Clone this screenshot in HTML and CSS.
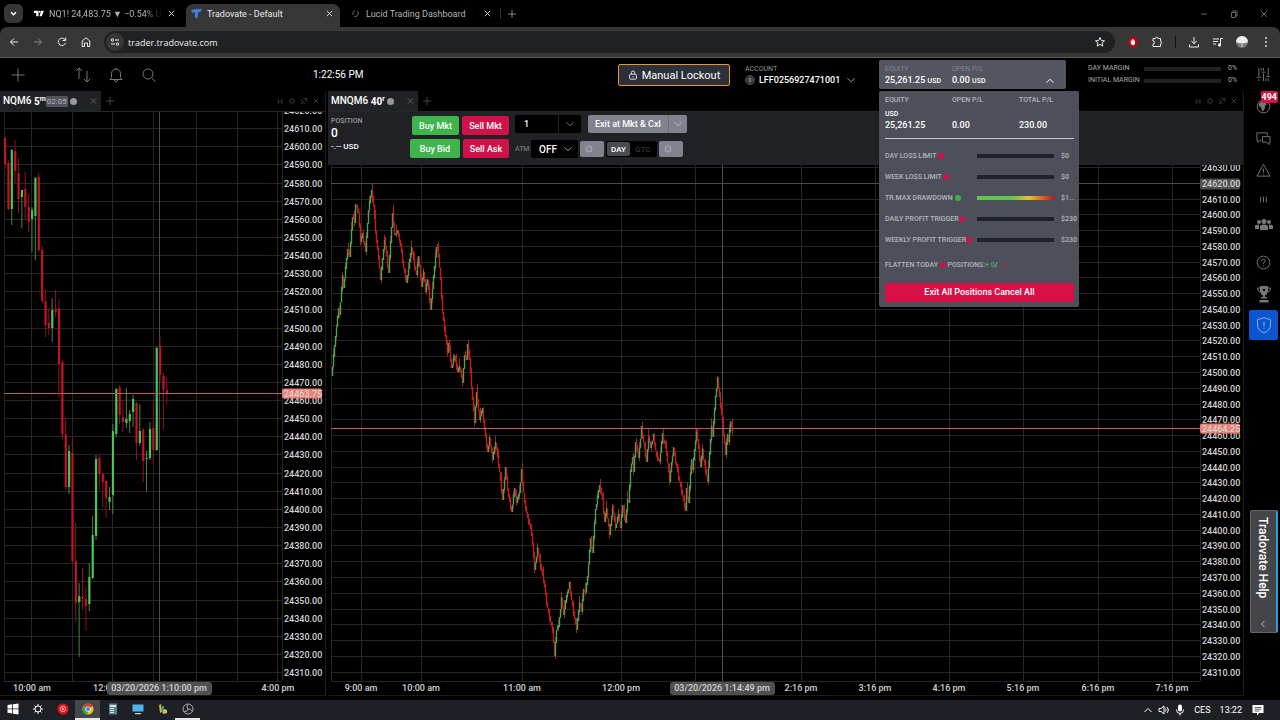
FILE: index.html
```
<!DOCTYPE html>
<html lang="en">
<head>
    <meta charset="UTF-8">
    <meta name="viewport" content="width=device-width, initial-scale=1.0">
    <title>Tradovate - Default</title>
    <link rel="stylesheet" href="styles.css">
</head>
<body>

<!-- shared icons -->
<svg class="defs" aria-hidden="true">
    <symbol id="i-x" viewBox="0 0 10 10"><path d="M2 2l6 6M8 2l-6 6"/></symbol>
    <symbol id="i-plus" viewBox="0 0 10 10"><path d="M5 1v8M1 5h8"/></symbol>
    <symbol id="i-down" viewBox="0 0 10 10"><path d="M1.5 3.2L5 6.8l3.5-3.6"/></symbol>
    <symbol id="i-gear" viewBox="0 0 12 12"><circle cx="6" cy="6" r="3"/><path d="M6 1v2M6 9v2M1 6h2M9 6h2M2.5 2.5l1.4 1.4M8.1 8.1l1.4 1.4M2.5 9.5l1.4-1.4M8.1 3.9l1.4-1.4"/></symbol>
    <symbol id="i-pop" viewBox="0 0 10 10"><path d="M4 2h4.500v4M8.500 2L5 5.500M3.500 4H2l1.500 2L1.500 8.500 4.500 7 6 8.500"/></symbol>
</svg>

<div class="tabstrip">
    <button class="tab-search" aria-label="Search tabs"><svg viewBox="0 0 10 10"><use href="#i-down"/></svg></button>
    <div class="tab">
        <svg class="favicon" viewBox="0 0 12 12"><path d="M1 3h5v6H3.500V5.500H1zM9 3h3L9.500 9H7z" fill="#fff"/><circle cx="7.300" cy="4.200" r="1.100" fill="#fff"/></svg>
        <span class="tab-title">NQ1! 24,483.75 ▼ −0.54% Unnamed</span>
        <button class="tab-close" aria-label="Close"><svg viewBox="0 0 10 10"><use href="#i-x"/></svg></button>
    </div>
    <div class="tab active">
        <svg class="favicon" viewBox="0 0 12 12"><path d="M0 2L12 .8 10.500 4.200 8 4.500 7 11.500 4 10 4.500 5.200 1.500 4.800z" fill="#3b82e0"/></svg>
        <span class="tab-title">Tradovate - Default</span>
        <button class="tab-close" aria-label="Close"><svg viewBox="0 0 10 10"><use href="#i-x"/></svg></button>
    </div>
    <div class="tab">
        <svg class="favicon" viewBox="0 0 12 12"><path d="M8 3.500a3.300 3.300 0 0 1-3.500 5.500M3.300 7.500A3.300 3.300 0 0 1 5.500 3" fill="none" stroke="#777" stroke-width="1"/></svg>
        <span class="tab-title">Lucid Trading Dashboard</span>
        <button class="tab-close" aria-label="Close"><svg viewBox="0 0 10 10"><use href="#i-x"/></svg></button>
    </div>
    <button class="tab-new" aria-label="New tab"><svg viewBox="0 0 10 10"><use href="#i-plus"/></svg></button>
    <div class="window-controls">
        <button aria-label="Minimize"><svg viewBox="0 0 10 10"><path d="M2 5h6"/></svg></button>
        <button aria-label="Restore"><svg viewBox="0 0 10 10"><path d="M2.500 3.500h4v5h-4zM4 3.500V2h4v5H6.500"/></svg></button>
        <button aria-label="Close window"><svg viewBox="0 0 10 10"><use href="#i-x"/></svg></button>
    </div>
</div>

<div class="browserbar">
    <button aria-label="Back"><svg viewBox="0 0 12 12"><path d="M10 6H2.500M6 2.500L2.500 6 6 9.500"/></svg></button>
    <button class="dim" aria-label="Forward"><svg viewBox="0 0 12 12"><path d="M2 6h7.500M6 2.500L9.500 6 6 9.500"/></svg></button>
    <button aria-label="Reload"><svg viewBox="0 0 12 12"><path d="M9.500 7A3.700 3.700 0 1 1 9 3.700M9.700 1.500V4.500H6.700"/></svg></button>
    <button aria-label="Home"><svg viewBox="0 0 12 12"><path d="M2.200 5L6 1.800 9.800 5v5.500H7.500V7h-3v3.500H2.200z"/></svg></button>
    <div class="urlbar">
        <span class="site-info"><svg viewBox="0 0 12 12"><circle cx="3.500" cy="4" r="1.200"/><path d="M6 4h4M2 8h4"/><circle cx="8.500" cy="8" r="1.200"/></svg></span>
        <input type="text" aria-label="Address" value="trader.tradovate.com">
        <svg class="star" viewBox="0 0 12 12"><path d="M6 1.500l1.300 3 3.200.3-2.400 2.100.7 3.200L6 8.400l-2.800 1.700.7-3.200L1.500 4.800l3.200-.3z"/></svg>
    </div>
    <div class="extensions">
        <svg viewBox="0 0 12 12"><ellipse cx="6" cy="6" rx="4.500" ry="5.500" fill="#c4001a" stroke="none"/><path d="M4.300 7V4.500M5.400 7V3.300M6.500 7V3.300M7.500 7V4.500" stroke="#fff" stroke-width=".9"/><path d="M4 6h4v1.500L7 9H5L4 7.500z" fill="#fff" stroke="none"/></svg>
        <svg viewBox="0 0 12 12"><path d="M2 2.500h2.500a1.300 1.300 0 0 1 2.600 0h2.400v2.800a1.200 1.200 0 0 1 0 2.400v2.800H2V8a1.500 1.500 0 0 0 0-3z"/></svg>
        <span class="sep"></span>
        <svg viewBox="0 0 12 12"><path d="M6 1v6.500M3.300 5L6 7.700 8.700 5M1.500 8.500v2.500h9V8.500"/></svg>
        <svg viewBox="0 0 12 12"><path d="M1 3h6M1 5.500h5M1 8h3M8.500 9V2.500H11"/><circle cx="7.500" cy="9" r="1.200" fill="#eee"/></svg>
        <svg class="avatar" viewBox="0 0 12 12"><circle cx="6" cy="6" r="6" fill="#777" stroke="none"/><path d="M0 6a6 6 0 0 1 12 0q-3 2-6 1-3 1-6-1z" fill="#eee" stroke="none"/><path d="M6 7v4" stroke="#ddd"/></svg>
        <svg viewBox="0 0 12 12"><g fill="#ddd" stroke="none"><circle cx="6" cy="2" r="1"/><circle cx="6" cy="6" r="1"/><circle cx="6" cy="10" r="1"/></g></svg>
    </div>
</div>

<div class="app">
    <div class="main">
        <header class="header">
            <div class="tools">
                <button class="add" aria-label="Add"><svg viewBox="0 0 16 16"><path d="M8 1.500v13M1.500 8h13"/></svg></button>
                <button aria-label="Orders"><svg viewBox="0 0 16 16"><path d="M4 12V1M1 4l3-3 3 3M12 4v11M9 12l3 3 3-3"/></svg></button>
                <button aria-label="Alerts"><svg viewBox="0 0 16 16"><path d="M2 12.500h12l-1.500-2V6.500a4.500 4.500 0 0 0-9 0v4zM6.500 13a1.500 1.500 0 0 0 3 0M8 2V1"/></svg></button>
                <button aria-label="Search"><svg viewBox="0 0 16 16"><circle cx="7" cy="7" r="5"/><path d="M11 11l3.500 4"/></svg></button>
            </div>
            <time class="clock">1:22:56 PM</time>
            <button class="lockout">
                <svg viewBox="0 0 12 12"><rect x="2" y="5" width="8" height="6" rx="1"/><path d="M4 5V3.200a2 2 0 0 1 4 0V5M6 7.500v1.500"/></svg>
                Manual Lockout
            </button>
            <div class="account">
                <span class="label">ACCOUNT</span>
                <button>
                    <svg class="coin" viewBox="0 0 12 12"><circle cx="6" cy="6" r="5"/><circle cx="6" cy="6" r="2.800"/><path d="M5.200 4.500v3h1.500v-3z"/></svg>
                    <span>LFF0256927471001</span>
                    <svg class="caret" viewBox="0 0 10 10"><use href="#i-down"/></svg>
                </button>
            </div>
            <div class="balance">
                <button class="balance-box">
                    <span class="stat"><span class="label">EQUITY</span><b>25,261.25 <small>USD</small></b></span>
                    <span class="stat"><span class="label">OPEN P/L</span><b>0.00 <small>USD</small></b></span>
                    <svg class="caret up" viewBox="0 0 10 10"><use href="#i-down"/></svg>
                </button>
                <div class="risk">
                    <table>
                        <thead><tr><th>EQUITY</th><th>OPEN P/L</th><th>TOTAL P/L</th></tr></thead>
                        <tbody><tr><td><small>USD</small>25,261.25</td><td>0.00</td><td>230.00</td></tr></tbody>
                    </table>
                    <ul>
                        <li><span>DAY LOSS LIMIT <i class="dot"></i></span><span class="bar"></span><span>$0</span></li>
                        <li><span>WEEK LOSS LIMIT <i class="dot"></i></span><span class="bar"></span><span>$0</span></li>
                        <li><span>TR.MAX DRAWDOWN<i class="dot ok"></i></span><span class="bar heat"></span><span>$1...</span></li>
                        <li><span>DAILY PROFIT TRIGGER<i class="dot"></i></span><span class="bar"></span><span>$230</span></li>
                        <li><span>WEEKLY PROFIT TRIGGER<i class="dot"></i></span><span class="bar"></span><span>$230</span></li>
                    </ul>
                    <p>FLATTEN TODAY <i class="dot"></i> POSITIONS:<span class="long">+ 0</span>/<span class="short"> - 0</span></p>
                    <button class="exit-all">Exit All Positions Cancel All</button>
                </div>
            </div>
            <div class="margins">
                <span>DAY MARGIN</span><span class="bar"></span><span>0%</span>
                <span>INITIAL MARGIN</span><span class="bar"></span><span>0%</span>
            </div>
        </header>

        <div class="panels">
            <section class="panel">
                <div class="panel-tabs">
                    <div class="panel-tab">
                        <strong>NQM6 <b>5<sup>m</sup></b></strong><span class="countdown">02:05</span><i class="status"></i>
                        <button aria-label="Close NQM6"><svg viewBox="0 0 10 10"><use href="#i-x"/></svg></button>
                    </div>
                    <button aria-label="Add tab"><svg viewBox="0 0 10 10"><use href="#i-plus"/></svg></button>
                    <div class="panel-controls">
                        <button>H</button>
                        <button aria-label="Settings"><svg viewBox="0 0 12 12"><use href="#i-gear"/></svg></button>
                        <button aria-label="Pop out"><svg viewBox="0 0 10 10"><use href="#i-pop"/></svg></button>
                        <button aria-label="Close"><svg viewBox="0 0 10 10"><use href="#i-x"/></svg></button>
                    </div>
                </div>
                <div class="chart" id="chart-nq"></div>
            </section>

            <section class="panel">
                <div class="panel-tabs">
                    <div class="panel-tab">
                        <strong>MNQM6 <b>40<sup>r</sup></b></strong><i class="status"></i>
                        <button aria-label="Close MNQM6"><svg viewBox="0 0 10 10"><use href="#i-x"/></svg></button>
                    </div>
                    <button aria-label="Add tab"><svg viewBox="0 0 10 10"><use href="#i-plus"/></svg></button>
                    <div class="panel-controls">
                        <button>H</button>
                        <button aria-label="Settings"><svg viewBox="0 0 12 12"><use href="#i-gear"/></svg></button>
                        <button aria-label="Pop out"><svg viewBox="0 0 10 10"><use href="#i-pop"/></svg></button>
                        <button aria-label="Close"><svg viewBox="0 0 10 10"><use href="#i-x"/></svg></button>
                    </div>
                </div>
                <div class="trade">
                    <div class="position">
                        <span class="label">POSITION</span>
                        <b>0</b>
                        <span>-.-- USD</span>
                    </div>
                    <div class="orders">
                        <div>
                            <button class="buy">Buy Mkt</button>
                            <button class="sell">Sell Mkt</button>
                        </div>
                        <div>
                            <button class="buy wide">Buy Bid</button>
                            <button class="sell">Sell Ask</button>
                        </div>
                    </div>
                    <div class="options">
                        <div class="row">
                            <div class="qty">
                                <input type="text" aria-label="Quantity" value="1">
                                <button aria-label="Quantity presets"><svg viewBox="0 0 10 10"><use href="#i-down"/></svg></button>
                            </div>
                            <div class="exit">
                                <button>Exit at Mkt &amp; Cxl</button>
                                <button class="more" aria-label="More exits"><svg viewBox="0 0 10 10"><use href="#i-down"/></svg></button>
                            </div>
                        </div>
                        <div class="row tight">
                            <label for="atm">ATM</label>
                            <div class="atm">
                                <select id="atm"><option>OFF</option><option>ON</option></select>
                                <svg viewBox="0 0 10 10"><use href="#i-down"/></svg>
                            </div>
                            <button class="gear" aria-label="ATM settings"><svg viewBox="0 0 12 12"><use href="#i-gear"/></svg></button>
                            <div class="tif"><button class="on">DAY</button><button>GTC</button></div>
                            <button class="gear" aria-label="Order settings"><svg viewBox="0 0 12 12"><use href="#i-gear"/></svg></button>
                        </div>
                    </div>
                </div>
                <div class="chart" id="chart-mnq"></div>
            </section>
        </div>
    </div>

    <nav class="sidebar">
        <button aria-label="Settings"><svg viewBox="0 0 16 16"><path d="M3 1v9M3 13v2M1 11h4M8 1v3M8 7v8M6 5.500h4M13 1v8M13 12v3M11 10h4M5.500 1v3M10.500 12v3"/></svg></button>
        <button aria-label="News"><svg viewBox="0 0 16 16"><circle cx="8" cy="8" r="6.800"/><path d="M5 3l4 0 2 3-2 1v3l-2 3-1-4-3-2z" fill="#777"/></svg><span class="badge">494</span></button>
        <button aria-label="Chat"><svg viewBox="0 0 16 16"><path d="M6 10H4l-2 2v-2H1V2h11v3M7 6h8v6h-1v2.500L11.500 12H7z"/></svg></button>
        <button aria-label="Warnings"><svg viewBox="0 0 16 16"><path d="M8 1.500L15 14H1zM8 6v4M8 11.500v1"/></svg></button>
        <button class="short" aria-label="Columns"><svg viewBox="0 0 16 16"><path d="M5 5v6M8 5v6M11 5v6"/></svg></button>
        <button class="short" aria-label="Community"><svg class="big" viewBox="0 0 18 16"><g fill="#777" stroke="none"><circle cx="9" cy="4.500" r="2.500"/><circle cx="4" cy="5" r="2"/><circle cx="14" cy="5" r="2"/><path d="M5 13V9.500Q5 7.500 9 7.500t4 2V13zM0 12V9q0-1.500 4-1.500v4.500zM18 12V9q0-1.500-4-1.500v4.500z"/></g></svg></button>
        <button class="after-gap" aria-label="Help"><svg viewBox="0 0 16 16"><circle cx="8" cy="8" r="6.800"/><path d="M6 6.500Q6 4.500 8 4.500t2 1.800Q10 7.500 8 8.500v1M8 11v1"/></svg></button>
        <button aria-label="Challenges"><svg class="big" viewBox="0 0 16 18"><path d="M4 3H1.500q0 4 3.500 4M12 3h2.500q0 4-3.500 4"/><path d="M4 1h8v5q-1 4-3 4.500V12h2v1.500H5V12h2v-1.500Q5 10 4 6zM3.500 15h9v2.500h-9z" fill="#777" stroke="none"/><circle cx="8" cy="5" r="1.300" fill="#111" stroke="none"/></svg></button>
        <button class="active" aria-label="Risk"><svg class="big" viewBox="0 0 16 18"><path d="M8 1.500Q11 3 14.500 3.500V9q0 5-6.500 8Q1.500 14 1.500 9V3.500Q5 3 8 1.500zM8 5.500v4.500M8 11.500v1.500"/></svg></button>
        <button class="help-tab">Tradovate Help <svg viewBox="0 0 10 10"><path d="M6.500 2L3.500 5l3 3"/></svg></button>
    </nav>
</div>

<footer class="taskbar">
    <button aria-label="Start"><svg viewBox="0 0 12 12"><path d="M.5 2l4.700-.7v4.200H.5zM6 1.200L11.500.5v5H6zM.5 6.300h4.700v4.200L.5 9.800zM6 6.300h5.500v5.200L6 10.700z" fill="#fff"/></svg></button>
    <button aria-label="Settings"><svg class="stroke" viewBox="0 0 12 12"><use href="#i-gear"/></svg></button>
    <button aria-label="Music"><svg viewBox="0 0 12 12"><circle cx="6" cy="6" r="5.500" fill="#e8101c"/><circle cx="6" cy="6" r="2.700" fill="none" stroke="#fff" stroke-width=".6"/><path d="M5.200 4.700L7.500 6 5.200 7.300z" fill="#fff"/></svg></button>
    <button class="open current" aria-label="Chrome"><svg viewBox="0 0 12 12"><circle cx="6" cy="6" r="5.500" fill="#fbc116"/><path d="M6 6L1.200 3.200A5.500 5.500 0 0 1 10.800 3.200z" fill="#e33b2e"/><path d="M6 6L1.200 3.200A5.500 5.500 0 0 0 5.500 11.500z" fill="#2da94f"/><circle cx="6" cy="6" r="2.600" fill="#fff"/><circle cx="6" cy="6" r="2" fill="#4285f4"/></svg></button>
    <button aria-label="Calculator"><svg viewBox="0 0 12 12"><path d="M2 .5h8v11H2z" fill="#5d7f8c"/><path d="M3 2h6v2H3z" fill="#cfe6ea"/><path d="M3 5.500h4M3 7.500h4M3 9.500h4" stroke="#cfe6ea"/></svg></button>
    <button aria-label="Computer"><svg viewBox="0 0 12 12"><path d="M.5 1.500h11v7H.5z" fill="#4fb4ea"/><path d="M3 10h6v1.200H3z" fill="#cfd8dc"/></svg></button>
    <button aria-label="Trading"><svg viewBox="0 0 12 12"><path d="M2 2l2-1 1 8-2 1z" fill="#d9b13b"/><path d="M5 3h2v7H5z" fill="#2f9e93"/><path d="M7 6l3 1v3l-4 1z" fill="#e7c24c"/></svg></button>
    <button class="open" aria-label="Recorder"><svg viewBox="0 0 12 12"><circle cx="6" cy="6" r="5" fill="none" stroke="#aaa"/><path d="M6 6Q4 4 6 1.500M6 6q3-.5 4 2.500M6 6q-.5 3-4 2.500" fill="none" stroke="#aaa"/></svg></button>
    <div class="tray">
        <svg class="stroke" viewBox="0 0 12 12"><path d="M2.500 8L6 4.500 9.500 8"/></svg>
        <svg class="stroke" viewBox="0 0 12 12"><path d="M1 4.500h2L6 2v8L3 7.500H1zM7.500 4.500q1.500 1.500 0 3M9 3q3 3 0 6"/></svg>
        <svg viewBox="0 0 12 12"><rect x="4" y=".5" width="4" height="7" rx="2" fill="#fff"/><path d="M2.500 5.500q0 4 3.500 4t3.500-4M6 9.500v2" fill="none" stroke="#fff"/></svg>
        <span>CES</span>
        <time>13:22</time>
        <svg viewBox="0 0 12 12"><path d="M.5 1h11v8H7l-2 2.500V9H.5z" fill="#fff"/><path d="M2.500 3.500h7M2.500 5.200h7M2.500 7h5" stroke="#222" stroke-width=".7"/></svg>
    </div>
</footer>

<script src="script.js"></script>
</body>
</html>
```
FILE: styles.css
```
* {
    box-sizing: border-box;
}

body {
    display: flex;
    flex-direction: column;
    min-height: 100vh;
    margin: 0;
    background-color: #000;
    color: #fff;
    font-family: Roboto, 'Liberation Sans', sans-serif;
    font-size: 9px;
}

button, input, select {
    margin: 0;
    padding: 0;
    border: none;
    background: none;
    color: inherit;
    font: inherit;
}

button {
    cursor: pointer;
}

svg {
    display: block;
    flex: none;
    width: 10px;
    height: 10px;
    fill: none;
    stroke: currentColor;
}

.defs {
    position: absolute;
    width: 0;
    height: 0;
}

/* Browser */
.tabstrip {
    display: flex;
    align-items: center;
    height: 27px;
    padding-left: 4px;
    color: #b4b4b4;
}

.tab-search {
    display: flex;
    align-items: center;
    justify-content: center;
    width: 19px;
    height: 19px;
    border-radius: 6px;
    background-color: #373737;
    color: #fff;
}

.tab-search svg {
    width: 7px;
    height: 7px;
    stroke-width: 2;
}

.tab {
    display: flex;
    align-items: center;
    gap: 5px;
    width: 154px;
    height: 23px;
    margin-top: 4px;
    padding: 0 10px 4px;
}

.tab:nth-child(2) {
    width: 163px;
}

.tab.active {
    padding: 0 6px 4px 5px;
    border-radius: 7px 7px 0 0;
    background-color: #373737;
    color: #e8e8e8;
}

.tab:nth-child(4) {
    width: 160px;
    padding-right: 8px;
}

.favicon {
    width: 11px;
    height: 11px;
    stroke: none;
}

.tab-title {
    flex: 1;
    overflow: hidden;
    white-space: nowrap;
}

.tab:nth-child(2) .tab-title {
    mask-image: linear-gradient(90deg, #000 85%, transparent);
}

.tab-close {
    color: #ddd;
}

.tab-close svg {
    width: 9px;
    height: 9px;
}

.tab-new {
    padding-left: 6px;
    border-left: 1px solid #333;
    color: #888;
}

.window-controls {
    display: flex;
    gap: 20px;
    margin-left: auto;
    padding-right: 11px;
    color: #666;
}

.browserbar {
    display: flex;
    align-items: center;
    gap: 12px;
    height: 31px;
    padding: 0 8px;
    border-bottom: 1px solid #5a5a5a;
    border-radius: 7px 7px 0 0;
    background-color: #373737;
    color: #eee;
}

.browserbar svg {
    width: 12px;
    height: 12px;
}

.browserbar .dim {
    color: #888;
}

.urlbar {
    display: flex;
    flex: 1;
    align-items: center;
    gap: 4px;
    height: 22px;
    padding: 0 9px 0 2px;
    border-radius: 11px;
    background-color: #1f2123;
}

.urlbar input {
    flex: 1;
    font-family: 'Open Sans', sans-serif;
}

.site-info {
    padding: 3px;
    border-radius: 50%;
    background-color: #373737;
}

.extensions {
    display: flex;
    align-items: center;
    gap: 12px;
}

.sep {
    width: 1px;
    height: 12px;
    background-color: #111;
}

/* App shell */
.app {
    display: flex;
    flex: 1;
}

.main {
    display: flex;
    flex: 1;
    flex-direction: column;
    min-width: 0;
}

.header {
    display: flex;
    align-items: flex-start;
    height: 33px;
    padding: 2px 7px 0 10px;
}

.tools {
    display: flex;
    align-items: center;
    gap: 17px;
    height: 29px;
    color: #777;
}

.tools svg {
    width: 16px;
    height: 16px;
}

.tools .add {
    margin-right: 32px;
}

.clock {
    margin: 8px auto 0 156px;
    font-size: 10px;
    line-height: 13px;
}

.lockout {
    display: flex;
    align-items: center;
    justify-content: center;
    gap: 4px;
    width: 112px;
    height: 22px;
    margin: 4px 15px 0 0;
    border: 1px solid #f0962a;
    border-radius: 2px;
    background-color: #2b303b;
    font-size: 11px;
}

.label {
    font-size: 7px;
    line-height: 9px;
    color: #999;
}

.account {
    width: 134px;
    padding-top: 5px;
}

.account .label {
    display: block;
}

.account button {
    display: flex;
    align-items: center;
    gap: 4px;
    font-weight: 500;
    line-height: 12px;
}

.account svg {
    color: #999;
}

.account .caret {
    margin-left: 2px;
}

.balance {
    position: relative;
    width: 209px;
}

.balance-box {
    display: flex;
    align-items: flex-start;
    width: 187px;
    height: 29px;
    padding: 5px 11px 0 6px;
    border-radius: 2px;
    background-color: #54565f;
    text-align: left;
}

.stat {
    display: flex;
    flex-direction: column;
    width: 67px;
    white-space: nowrap;
}

.stat .label {
    color: #83858d;
}

.stat b {
    font-weight: 500;
    line-height: 13px;
}

small {
    font-size: 7px;
}

.caret.up {
    margin: 11px 0 0 auto;
    transform: rotate(180deg);
}

/* Risk drop-down */
.risk {
    position: absolute;
    z-index: 2;
    top: 31px;
    left: 0;
    width: 200px;
    padding: 4px 5px 5px 6px;
    border-radius: 2px;
    background-color: #4d505a;
    font-size: 7px;
    font-weight: 500;
    color: #b4b6bd;
}

.risk table {
    width: 100%;
    table-layout: fixed;
    border-collapse: collapse;
    border-bottom: 1px solid #c4c5ca;
}

.risk th {
    width: 67px;
    height: 10px;
    padding: 0;
    font-weight: 500;
    text-align: left;
}

.risk th:last-child {
    width: auto;
}

.risk td {
    height: 33px;
    padding: 0 0 7px;
    vertical-align: bottom;
    font-size: 9px;
    line-height: 11px;
    color: #fff;
}

.risk td small {
    display: block;
}

.risk ul {
    margin: 7px 0 0;
    padding: 0;
    list-style: none;
}

.risk li {
    display: grid;
    grid-template-columns: 92px 77px 20px;
    align-items: center;
    height: 21px;
    white-space: nowrap;
}

.risk li span:last-child {
    padding-left: 7px;
}

.bar {
    height: 4px;
    background-color: #1f212b;
}

.bar.heat {
    background-image: linear-gradient(90deg, #63c455 45%, #e2c22c 68%, #d8642c 85%, #b01c24);
}

.dot {
    display: inline-block;
    width: 6px;
    height: 6px;
    border-radius: 50%;
    background-color: #d11149;
    vertical-align: middle;
}

.dot.ok {
    margin-left: 2px;
    background-color: #3fb04e;
}

.risk p {
    margin: 9px 0 13px;
    line-height: 10px;
}

.long {
    color: #3fb04e;
}

.short {
    color: #a02c4c;
}

.exit-all {
    width: 100%;
    height: 19px;
    border-radius: 2px;
    background-color: #d90f47;
    font-size: 9px;
    font-weight: 500;
    color: #fff;
}

.margins {
    display: grid;
    grid-template-columns: 49px 77px auto;
    gap: 3px 7px;
    align-items: center;
    width: 149px;
    padding-top: 4px;
    font-size: 7px;
    line-height: 9px;
    color: #aaa;
    white-space: nowrap;
}

.margins .bar {
    background-color: #222;
}

/* Chart panels */
.panels {
    display: grid;
    flex: 1;
    grid-template-columns: 326px 1fr;
    gap: 2px;
    padding-bottom: 4px;
}

.panel {
    display: flex;
    flex-direction: column;
    min-width: 0;
    border-bottom: 1px solid #1b1b1b;
    border-right: 1px solid #1b1b1b;
}

.panel-tabs {
    display: flex;
    align-items: center;
    height: 21px;
    border-bottom: 1px solid #26272b;
    color: #444;
}

.panel-tab {
    display: flex;
    align-items: center;
    height: 20px;
    margin-right: 4px;
    padding: 0 3px;
    background-color: #212226;
    color: #666;
}

.panel-tab strong {
    font-size: 10px;
    font-weight: 500;
    color: #fff;
}

.panel-tab sup {
    font-size: 7px;
    line-height: 7px;
}

.panel-tab button {
    margin-left: 12px;
}

.panel-tab svg {
    width: 9px;
}

.countdown {
    padding: 0 1px;
    border-radius: 1px;
    background-color: #51545d;
    font-size: 8px;
    line-height: 11px;
    color: #b5b5b5;
}

.status {
    width: 7px;
    height: 7px;
    margin-left: 2px;
    border-radius: 50%;
    background-color: #999;
}

.panel-controls {
    display: flex;
    align-items: center;
    gap: 4px;
    margin-left: auto;
    padding-right: 5px;
}

.panel-controls button {
    width: 8px;
    font-size: 8px;
}

.panel-controls svg {
    width: 8px;
    height: 8px;
}

.chart {
    flex: 1;
    min-height: 0;
    overflow: hidden;
}

/* Drawn by script.js */
.chart svg {
    width: 100%;
    height: 100%;
    stroke: none;
}

.grid {
    stroke: #262626;
}

.cross {
    stroke: #4c4c4c;
}

.last {
    stroke: #b4615c;
}

.up-bar {
    fill: #4dc353;
    stroke: #3f8a48;
}

.down-bar {
    fill: #c41227;
    stroke: #8e1220;
}

.tick-up, .tick-down {
    stroke-width: 1.4;
}

.tick-up {
    stroke: #45a655;
}

.tick-down {
    stroke: #c91a1a;
}

.tick-back {
    stroke: #9c2a1c;
}

.axis-text {
    fill: #d2d2d2;
    font-size: 9px;
    font-weight: 500;
}

.chip {
    fill: #505050;
}

.chip-last {
    fill: #ec8075;
}

/* Order bar */
.trade {
    display: flex;
    height: 53px;
    padding: 3px 3px 0;
    background-color: #212226;
}

.position {
    display: flex;
    flex-direction: column;
    width: 79px;
    padding-top: 2px;
    font-size: 8px;
    font-weight: 500;
    line-height: 12px;
}

.position b {
    font-size: 12px;
    font-weight: 500;
    line-height: 15px;
}

.orders {
    display: flex;
    flex-direction: column;
    gap: 4px;
    width: 105px;
    padding: 1px 6px 0 0;
}

.orders div {
    display: flex;
    justify-content: flex-end;
    gap: 3px;
}

.orders button {
    width: 47px;
    height: 19px;
    border-radius: 2px;
    font-weight: 500;
    white-space: nowrap;
}

.orders .wide {
    width: 51px;
}

.buy {
    background-color: #3eb44b;
}

.sell {
    background-color: #d11149;
}

.options {
    display: flex;
    flex-direction: column;
    gap: 7px;
}

.row {
    display: flex;
    align-items: center;
    gap: 7px;
    height: 18px;
}

.row.tight {
    gap: 2px;
}

.row label {
    width: 14px;
    font-size: 7px;
    color: #888;
}

.qty {
    display: flex;
    width: 66px;
    height: 18px;
    border-radius: 2px;
    background-color: #000;
    color: #777;
}

.qty input {
    width: 44px;
    padding-left: 9px;
    border-right: 1px solid #222;
    color: #fff;
    font-weight: 500;
}

.qty button, .exit .more {
    display: flex;
    flex: 1;
    align-items: center;
    justify-content: center;
}

.exit {
    display: flex;
    height: 18px;
    border-radius: 2px;
    background-color: #80838d;
}

.exit button {
    padding: 0 7px;
    font-weight: 500;
    white-space: nowrap;
}

.exit .more {
    padding: 0 4px;
    border-left: 1px solid #6c6f78;
    color: #bbb;
}

.atm {
    position: relative;
    width: 47px;
    height: 18px;
    border-radius: 2px;
    background-color: #000;
    color: #999;
}

.atm select {
    width: 100%;
    height: 18px;
    padding-left: 8px;
    appearance: none;
    color: #fff;
    font-size: 10px;
    font-weight: 500;
}

.atm svg {
    position: absolute;
    top: 4px;
    right: 5px;
}

.gear {
    width: 24px;
    height: 16px;
    padding-left: 4px;
    border-radius: 2px;
    background-color: #80838d;
    color: #aeb0b8;
}

.tif {
    display: flex;
    height: 16px;
    padding: 1px;
    border-radius: 2px;
    background-color: #000;
}

.tif button {
    width: 26px;
    border-radius: 2px;
    font-size: 8px;
    color: #444;
}

.tif .on {
    width: 23px;
    background-color: #4b4c50;
    font-weight: 500;
    color: #fff;
}

/* Right rail */
.sidebar {
    display: flex;
    flex-direction: column;
    align-items: center;
    width: 36px;
    padding-left: 3px;
    color: #777;
}

.sidebar button {
    position: relative;
    display: flex;
    align-items: center;
    justify-content: center;
    width: 29px;
    height: 32px;
}

.sidebar svg {
    width: 15px;
    height: 15px;
}

.sidebar .big {
    width: 18px;
    height: 18px;
}

.sidebar .short {
    height: 26px;
    color: #777;
}

.sidebar .after-gap {
    margin-top: 8px;
}

.sidebar .active {
    height: 30px;
    border-radius: 2px;
    background-color: #0b56cf;
    color: #84aef0;
}

.badge {
    position: absolute;
    top: 1px;
    right: 0;
    padding: 0 1px;
    border-radius: 2px;
    background-color: #d11149;
    font-weight: 700;
    line-height: 12px;
    color: #fff;
}

.sidebar .help-tab {
    justify-content: space-between;
    width: 28px;
    height: 123px;
    margin: auto 0 67px;
    padding: 6px 0 3px;
    border: 1px solid #666;
    border-right: 2px solid #2e9fd0;
    border-radius: 2px;
    background-color: #444548;
    font-size: 12px;
    font-weight: 500;
    color: #fff;
    writing-mode: vertical-rl;
}

.sidebar .help-tab svg {
    width: 10px;
    height: 10px;
    color: #bbb;
}

/* Taskbar */
.taskbar {
    display: flex;
    height: 20px;
    background-color: #1f2025;
}

.taskbar svg {
    width: 12px;
    height: 12px;
    stroke: none;
}

.taskbar .stroke {
    stroke: #fff;
}

.taskbar button {
    display: flex;
    align-items: center;
    justify-content: center;
    width: 25px;
    border-bottom: 2px solid transparent;
}

.taskbar .open {
    border-bottom-color: #e8e8e8;
}

.taskbar .current {
    background-color: #46474b;
}

.tray {
    display: flex;
    align-items: center;
    gap: 4px;
    margin-left: auto;
    padding-right: 16px;
}

.tray span {
    margin: 0 5px 0 4px;
}

.tray time {
    margin-right: 6px;
}
```
FILE: script.js
```
const NS = 'http://www.w3.org/2000/svg';

// NQM6 5m bars, in plot pixels: direction, high, body top, body bottom, low
const nqBars = [
    ['d', 25, 26, 52, 56], ['d', 48, 51, 97, 98], ['u', 37, 38, 97, 113], ['d', 28, 39, 59, 71],
    ['d', 46, 61, 87, 101], ['u', 78, 78, 85, 116], ['d', 60, 77, 95, 108], ['d', 82, 95, 110, 120],
    ['u', 95, 98, 107, 140], ['u', 65, 66, 104, 148], ['d', 61, 65, 138, 140], ['d', 134, 138, 189, 191],
    ['d', 178, 189, 213, 225], ['d', 196, 211, 216, 223], ['u', 186, 198, 216, 230], ['d', 178, 197, 200, 205],
    ['d', 187, 197, 252, 285], ['d', 248, 250, 322, 328], ['d', 306, 322, 375, 378], ['u', 333, 339, 375, 382],
    ['d', 325, 341, 449, 451], ['d', 411, 449, 491, 510], ['u', 471, 484, 490, 545], ['d', 456, 485, 487, 498],
    ['d', 475, 487, 494, 519], ['u', 451, 465, 492, 499], ['u', 404, 423, 466, 467], ['u', 343, 347, 424, 428],
    ['d', 342, 346, 362, 378], ['d', 361, 362, 370, 395], ['d', 368, 369, 386, 406], ['u', 375, 385, 390, 398],
    ['u', 312, 319, 383, 402], ['u', 276, 277, 322, 325], ['d', 273, 275, 303, 312], ['d', 288, 305, 310, 320],
    ['u', 276, 307, 311, 316], ['u', 298, 302, 309, 321], ['u', 283, 287, 300, 315], ['d', 290, 291, 331, 348],
    ['u', 292, 319, 331, 334], ['d', 315, 318, 349, 370], ['u', 339, 346, 347, 379], ['u', 310, 317, 346, 348],
    ['d', 288, 316, 338, 351], ['u', 235, 236, 338, 339], ['d', 224, 234, 263, 270], ['d', 261, 264, 278, 318],
    ['d', 265, 278, 282, 292]
];

// MNQM6 swing points, x and y from the window's top left
const mnqSwings = [
    [332, 376], [334, 357], [337, 327], [339, 310], [340, 315], [343, 277], [344, 288], [348, 250], [350, 257],
    [353, 217], [355, 223], [356, 205], [359, 213], [361, 242], [363, 235], [366, 252], [369, 210], [372, 191],
    [374, 207], [377, 243], [379, 257], [381, 280], [385, 240], [389, 273], [393, 213], [395, 235], [398, 233],
    [400, 240], [402, 253], [404, 268], [407, 283], [412, 248], [415, 267], [417, 275], [419, 258], [422, 287],
    [424, 272], [426, 292], [428, 280], [431, 310], [437, 247], [439, 255], [441, 280], [443, 313], [446, 337],
    [448, 353], [449, 343], [452, 368], [455, 357], [458, 372], [460, 367], [463, 383], [465, 355], [467, 360],
    [468, 345], [470, 360], [473, 400], [475, 423], [477, 392], [480, 420], [483, 410], [485, 430], [488, 452],
    [490, 440], [493, 460], [496, 443], [500, 472], [503, 500], [506, 470], [509, 497], [512, 512], [515, 490],
    [517, 503], [520, 493], [522, 472], [525, 503], [528, 518], [532, 533], [535, 570], [538, 550], [541, 567],
    [544, 580], [547, 603], [551, 623], [553, 630], [555, 656], [557, 630], [559, 627], [562, 600], [564, 615],
    [567, 597], [570, 585], [572, 600], [574, 613], [577, 630], [580, 603], [582, 612], [584, 590], [586, 593],
    [588, 577], [591, 540], [593, 553], [596, 510], [600, 486], [603, 500], [605, 522], [607, 510], [610, 535],
    [613, 508], [616, 528], [619, 515], [621, 528], [623, 507], [626, 523], [628, 500], [629, 503], [631, 472],
    [633, 457], [634, 472], [636, 443], [639, 458], [642, 429], [644, 443], [647, 462], [649, 438], [651, 448],
    [654, 437], [657, 457], [660, 462], [663, 435], [667, 453], [670, 482], [672, 463], [674, 450], [677, 467],
    [681, 487], [686, 511], [687, 490], [689, 503], [692, 460], [693, 470], [697, 432], [701, 467], [703, 450],
    [704, 460], [708, 482], [712, 427], [713, 437], [716, 397], [718, 380], [720, 397], [723, 423], [726, 455],
    [728, 435], [729, 442], [731, 423], [733, 432]
];

function add(parent, name, attrs, text) {
    const el = document.createElementNS(NS, name);
    for (const key in attrs) el.setAttribute(key, attrs[key]);
    if (text) el.textContent = text;
    parent.appendChild(el);
    return el;
}

function line(svg, cls, x1, y1, x2, y2) {
    return add(svg, 'line', { class: cls, x1, y1, x2, y2 });
}

// Axes, grid and markers shared by both charts
function drawChart(id, opt) {
    const box = document.getElementById(id);
    box.innerHTML = '';
    const w = box.clientWidth;
    const h = box.clientHeight;
    const svg = add(box, 'svg', {});
    const right = w - 43;
    const bottom = h - 14;
    const yOf = price => opt.topY + (opt.topPrice - price) * opt.scale;

    for (let price = opt.topPrice; yOf(price) < bottom; price -= 10) {
        const y = Math.round(yOf(price)) + 0.5;
        line(svg, 'grid', opt.left, y, right, y);
        add(svg, 'text', { class: 'axis-text', x: w - 41, y: y + 3 }, price.toFixed(2));
    }
    opt.verticals.forEach(x => line(svg, 'grid', x + 0.5, 0, x + 0.5, bottom));
    line(svg, 'grid', opt.left + 0.5, 0, opt.left + 0.5, bottom);
    line(svg, 'grid', right + 0.5, 0, right + 0.5, bottom);
    line(svg, 'grid', opt.left, bottom + 0.5, right, bottom + 0.5);

    if (opt.crossPrice) {
        const y = Math.round(yOf(opt.crossPrice)) + 0.5;
        line(svg, 'cross', opt.left, y, right, y);
        add(svg, 'rect', { class: 'chip', x: w - 43, y: y - 5, width: 40, height: 11, rx: 2 });
        add(svg, 'text', { class: 'axis-text', x: w - 41, y: y + 3 }, opt.crossPrice.toFixed(2));
    }
    line(svg, 'cross', opt.crossX + 0.5, 0, opt.crossX + 0.5, bottom);

    opt.draw(svg);

    const lastY = Math.round(yOf(opt.last)) + 0.5;
    line(svg, 'last', opt.left, lastY, right, lastY);
    add(svg, 'rect', { class: 'chip-last', x: w - 43, y: lastY - 5, width: 40, height: 10, rx: 2 });
    add(svg, 'text', { class: 'axis-text', x: w - 41, y: lastY + 3 }, opt.last.toFixed(2));

    opt.times.forEach(([x, label]) => {
        add(svg, 'text', { class: 'axis-text', x, y: h - 4, 'text-anchor': 'middle' }, label);
    });
    add(svg, 'rect', { class: 'chip', x: opt.crossX - 52, y: h - 13, width: 105, height: 13, rx: 3 });
    add(svg, 'text', { class: 'axis-text', x: opt.crossX, y: h - 4, 'text-anchor': 'middle' }, opt.crossTime);
}

function drawBars(svg) {
    nqBars.forEach(([dir, high, top, low, bottom], i) => {
        const x = 5 + i * 3.37;
        const g = add(svg, 'g', { class: dir === 'u' ? 'up-bar' : 'down-bar' });
        line(g, '', x, high, x, bottom);
        add(g, 'rect', { x: x - 1, y: top, width: 2.2, height: Math.max(1, low - top), stroke: 'none' });
    });
}

function drawTicks(svg) {
    const g = add(svg, 'g', { transform: 'translate(-328 -165)' });
    for (let i = 1; i < mnqSwings.length; i++) {
        const [x0, y0] = mnqSwings[i - 1];
        const [x1, y1] = mnqSwings[i];
        const cls = y1 < y0 ? 'tick-up' : 'tick-down';
        const step = (y1 - y0) / (x1 - x0);
        for (let x = x0; x < x1; x++) {
            const a = y0 + step * (x - x0);
            const b = a + step;
            const top = Math.min(a, b);
            const low = Math.max(a, b);
            // pullback bars between the swings
            if (x % 3 === 0) line(g, 'tick-back', x + 0.5, top - 3 - (x * 5) % 7, x + 0.5, low + 3);
            line(g, cls, x + 0.5, top - (x * 7) % 4, x + 0.5, low + (x * 5) % 5);
        }
    }
}

function draw() {
    drawChart('chart-nq', {
        left: 4, topPrice: 24620, topY: -2, scale: 1.813,
        verticals: [31, 72, 112, 153, 196, 237, 277],
        crossX: 159, crossTime: '03/20/2026 1:10:00 pm', last: 24463.75,
        times: [[32, '10:00 am'], [112, '12:00 pm'], [278, '4:00 pm']],
        draw: drawBars
    });
    drawChart('chart-mnq', {
        left: 3, topPrice: 24630, topY: 2, scale: 1.577,
        verticals: [33, 93, 194, 293, 367, 473, 547, 621, 695, 770, 844],
        crossX: 394, crossPrice: 24620, crossTime: '03/20/2026 1:14:49 pm', last: 24464.25,
        times: [[33, '9:00 am'], [93, '10:00 am'], [194, '11:00 am'], [293, '12:00 pm'], [473, '2:16 pm'],
            [547, '3:16 pm'], [621, '4:16 pm'], [695, '5:16 pm'], [770, '6:16 pm'], [844, '7:16 pm']],
        draw: drawTicks
    });
}

draw();
window.addEventListener('resize', draw);
```
